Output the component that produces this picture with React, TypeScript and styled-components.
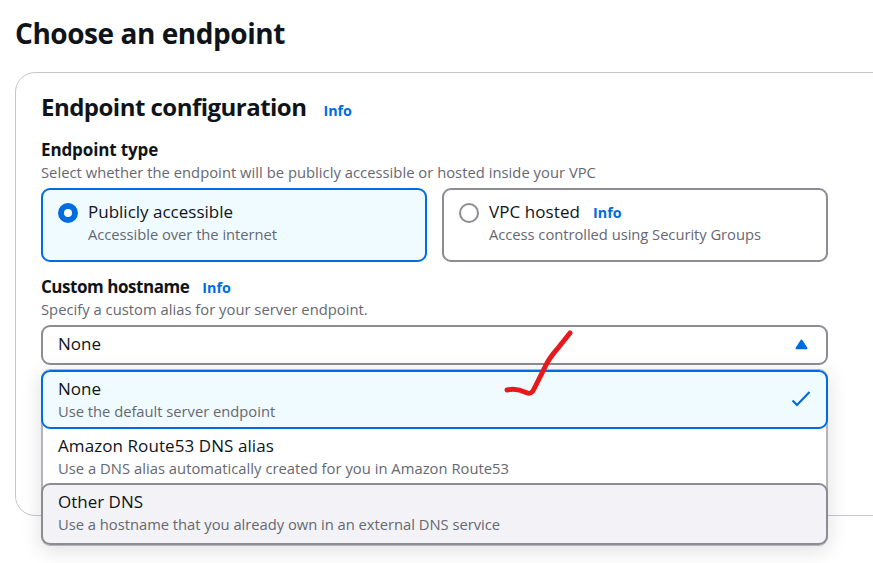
import React from 'react';
import styled, { createGlobalStyle, css } from 'styled-components';

const color = {
  text: '#0f141a',
  muted: '#656871',
  blue: '#006ce0',
  selected: '#f0fbff',
  hover: '#f3f3f7',
  control: '#8c8c94',
  menu: '#b4b4bb',
  divider: '#c6c6cd',
};

const GlobalStyle = createGlobalStyle`
  *, *::before, *::after { box-sizing: border-box; }
  body { margin: 0; background: #fff; overflow: hidden; }
`;

const Page = styled.main`
  width: 873px;
  height: 563px;
  overflow: hidden;
  padding: 15px 0 0 15px;
  background: #fff;
  color: ${color.text};
  font-family: 'Open Sans', 'Noto Sans', sans-serif;
  white-space: nowrap;
`;

const Title = styled.h1`
  margin: 0 0 21px;
  font-size: 28px;
  font-weight: 700;
  line-height: 36px;
  letter-spacing: -0.45px;
`;

const Container = styled.section`
  width: 900px;
  height: 444px;
  padding: 19px 0 0 25px;
  border: 1px solid ${color.divider};
  border-radius: 20px;
`;

const Header = styled.header`
  display: flex;
  align-items: baseline;
  gap: 17px;
  height: 30px;
  margin-bottom: 15px;
`;

const Heading = styled.h2`
  margin: 0;
  font-size: 24px;
  font-weight: 700;
  line-height: 30px;
  letter-spacing: -0.52px;
`;

const InfoLink = styled.a`
  color: ${color.blue};
  font-size: 14.3px;
  font-weight: 700;
  line-height: 20px;
`;

const Form = styled.div`
  display: flex;
  flex-direction: column;
  gap: 12px;
  width: 787px;
`;

const Field = styled.div`
  position: relative;
`;

const LabelRow = styled.div`
  display: flex;
  align-items: baseline;
  gap: 13px;
  height: 24px;
  margin-bottom: 1px;
`;

const FieldLabel = styled.span<{ $tracking?: number }>`
  font-size: 17px;
  font-weight: 700;
  line-height: 26px;
  letter-spacing: ${(p) => p.$tracking ?? 0}px;
`;

const OptionLabel = styled.div<{ $tracking?: number }>`
  height: 24px;
  font-size: 17px;
  line-height: 26px;
  letter-spacing: ${(p) => p.$tracking ?? 0}px;
`;

const Description = styled.div<{ $tracking?: number }>`
  color: ${color.muted};
  font-size: 14.75px;
  line-height: 20px;
  letter-spacing: ${(p) => p.$tracking ?? 0}px;
`;

const Tiles = styled.div`
  display: grid;
  grid-template-columns: 386px 386px;
  gap: 15px;
  margin-top: 6px;
`;

const Tile = styled.div<{ $selected?: boolean }>`
  display: flex;
  gap: 10px;
  height: 74px;
  padding: 9px 15px;
  border: 2px solid ${(p) => (p.$selected ? color.blue : color.control)};
  border-radius: 9px;
  background: ${(p) => (p.$selected ? color.selected : '#fff')};
`;

const Radio = styled.span<{ $selected?: boolean }>`
  flex: none;
  width: 20px;
  height: 20px;
  margin-top: 4px;
  border: ${(p) => (p.$selected ? `6px solid ${color.blue}` : `2px solid ${color.control}`)};
  border-radius: 50%;
  background: #fff;
`;

const SelectTrigger = styled.div`
  display: flex;
  justify-content: space-between;
  height: 40px;
  margin-top: 6px;
  padding: 4px 18.5px 0 15px;
  border: 2px solid ${color.control};
  border-radius: 9px;
`;

const Caret = styled.svg`
  width: 13px;
  height: 11px;
  margin-top: 7.5px;
`;

const Menu = styled.div`
  position: absolute;
  top: calc(100% + 4px);
  left: 0;
  width: 787px;
  height: 177px;
  border: 2px solid ${color.menu};
  border-top-width: 1px;
  border-bottom-width: 1px;
  border-radius: 9px;
  background: #fff;
  box-shadow: 0 4px 20px 1px rgba(0, 7, 22, 0.12);
`;

const Option = styled.div<{ $state?: 'selected' | 'hover' }>`
  display: flex;
  align-items: center;
  justify-content: space-between;
  margin: 0 -2px;
  padding: 4px 15px 6px 15px;
  border: 2px solid transparent;
  border-radius: 9px;
  ${(p) =>
    p.$state === 'selected' &&
    css`
      border-color: ${color.blue};
      background: ${color.selected};
    `}
  ${(p) =>
    p.$state === 'hover' &&
    css`
      margin-top: -5px;
      padding-bottom: 9px;
      border-color: ${color.control};
      background: ${color.hover};
    `}
  ${(p) =>
    !p.$state &&
    css`
      padding-top: 2px;
      padding-bottom: 8px;
    `}
`;

const OptionText = styled.div`
  display: flex;
  flex-direction: column;
  gap: 1px;
`;

const CheckIcon = styled.svg`
  width: 20px;
  height: 18px;
`;

const PenMark = styled.svg`
  position: absolute;
  top: 51px;
  left: 459px;
  width: 76px;
  height: 76px;
  pointer-events: none;
`;

export default function App() {
  return (
    <>
      <GlobalStyle />
      <Page>
        <Title>Choose an endpoint</Title>
        <Container>
          <Header>
            <Heading>Endpoint configuration</Heading>
            <InfoLink>Info</InfoLink>
          </Header>
          <Form>
            <Field>
              <LabelRow>
                <FieldLabel $tracking={-0.12}>Endpoint type</FieldLabel>
              </LabelRow>
              <Description $tracking={0.03}>
                Select whether the endpoint will be publicly accessible or hosted inside your VPC
              </Description>
              <Tiles>
                <Tile $selected>
                  <Radio $selected />
                  <OptionText>
                    <OptionLabel>Publicly accessible</OptionLabel>
                    <Description $tracking={-0.04}>Accessible over the internet</Description>
                  </OptionText>
                </Tile>
                <Tile>
                  <Radio />
                  <div>
                    <LabelRow>
                      <OptionLabel $tracking={0.08}>VPC hosted</OptionLabel>
                      <InfoLink>Info</InfoLink>
                    </LabelRow>
                    <Description $tracking={-0.04}>Access controlled using Security Groups</Description>
                  </div>
                </Tile>
              </Tiles>
            </Field>
            <Field>
              <LabelRow>
                <FieldLabel $tracking={-0.46}>Custom hostname</FieldLabel>
                <InfoLink>Info</InfoLink>
              </LabelRow>
              <Description $tracking={0.02}>Specify a custom alias for your server endpoint.</Description>
              <SelectTrigger>
                <OptionLabel>None</OptionLabel>
                <Caret viewBox="0 0 13 11">
                  <path
                    d="M6.5 1.5 11.5 9.2H1.5Z"
                    fill={color.blue}
                    stroke={color.blue}
                    strokeWidth="2"
                    strokeLinejoin="round"
                  />
                </Caret>
              </SelectTrigger>
              <Menu>
                <Option $state="selected">
                  <OptionText>
                    <OptionLabel>None</OptionLabel>
                    <Description $tracking={-0.02}>Use the default server endpoint</Description>
                  </OptionText>
                  <CheckIcon viewBox="0 0 20 18">
                    <path d="M1.5 10.5 6 15 18.5 2" fill="none" stroke={color.blue} strokeWidth="2.2" />
                  </CheckIcon>
                </Option>
                <Option>
                  <OptionText>
                    <OptionLabel $tracking={0.08}>Amazon Route53 DNS alias</OptionLabel>
                    <Description $tracking={0.03}>
                      Use a DNS alias automatically created for you in Amazon Route53
                    </Description>
                  </OptionText>
                </Option>
                <Option $state="hover">
                  <OptionText>
                    <OptionLabel>Other DNS</OptionLabel>
                    <Description $tracking={-0.02}>
                      Use a hostname that you already own in an external DNS service
                    </Description>
                  </OptionText>
                </Option>
              </Menu>
              <PenMark viewBox="500 325 76 76">
                <path
                  d="M507 390C515 388 521 390 526 392.500C530 394.500 532 393 534 389L546 365C550 357 554 353 558 348L570 333"
                  fill="none"
                  stroke="#e8191c"
                  strokeWidth="5"
                  strokeLinecap="round"
                  strokeLinejoin="round"
                />
              </PenMark>
            </Field>
          </Form>
        </Container>
      </Page>
    </>
  );
}
